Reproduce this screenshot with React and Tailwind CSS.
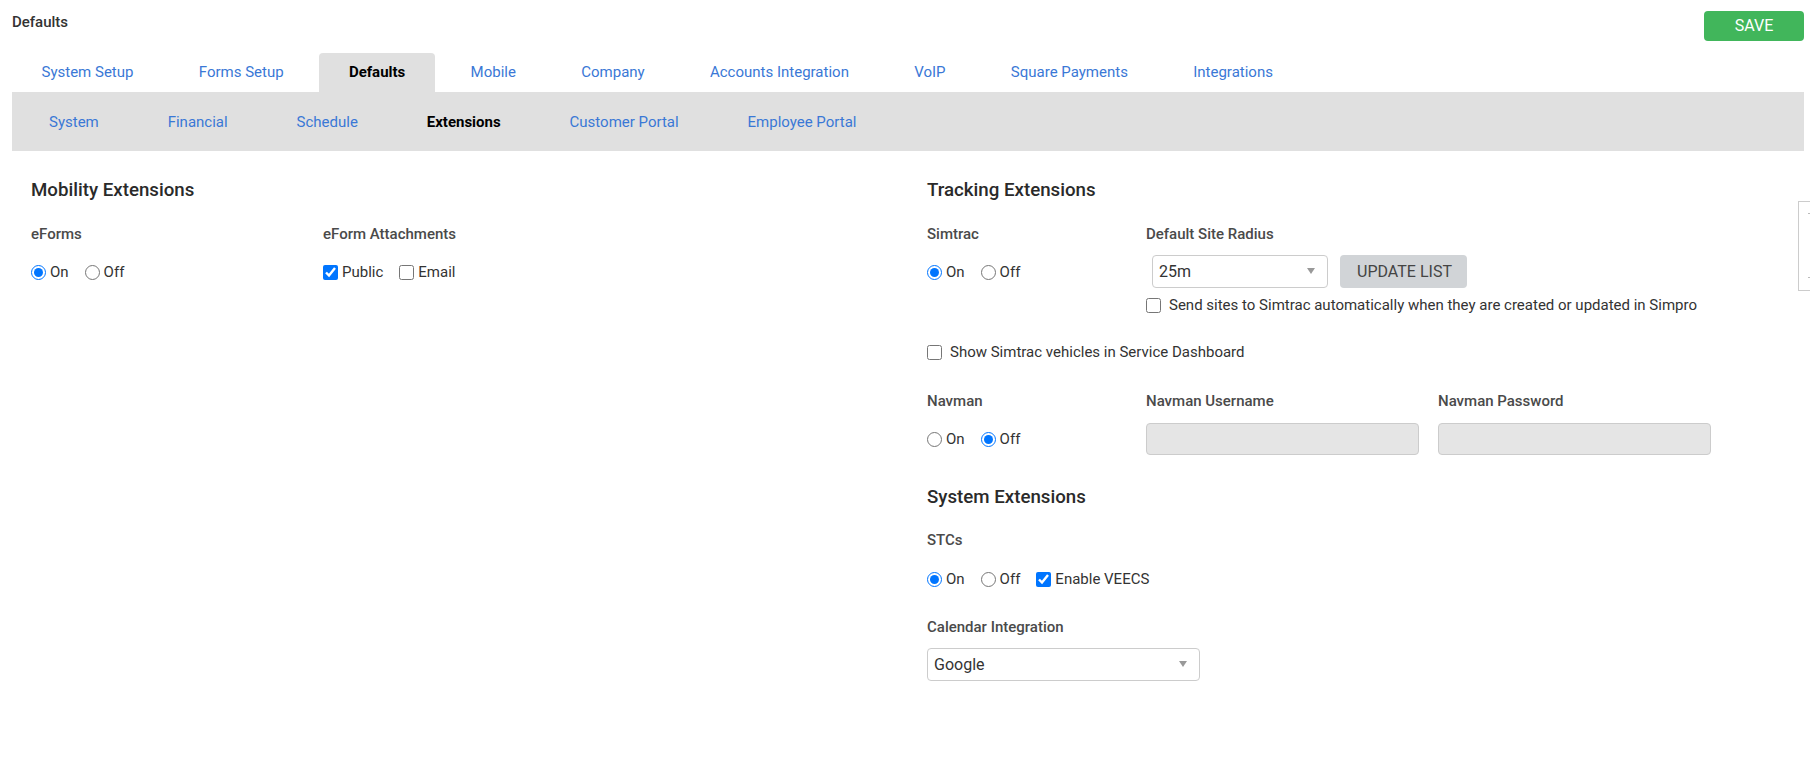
const mainTabs = ["System Setup", "Forms Setup", "Defaults", "Mobile", "Company", "Accounts Integration", "VoIP", "Square Payments", "Integrations"]
const subTabs = ["System", "Financial", "Schedule", "Extensions", "Customer Portal", "Employee Portal"]

function Radio({ label, checked, name }) {
  return (
    <label className="flex items-center gap-[4px] text-[15px] leading-5 text-[#333]">
      <input type="radio" name={name} defaultChecked={checked} className="m-0 size-[15px]" />
      {label}
    </label>
  )
}

function Check({ label, checked, wide }) {
  return (
    <label className={"flex items-center text-[15px] leading-5 text-[#333] " + (wide ? "gap-[8px]" : "gap-[4px]")}>
      <input type="checkbox" defaultChecked={checked} className="m-0 size-[15px]" />
      {label}
    </label>
  )
}

function OnOff({ name, on }) {
  return (
    <div className="flex items-center gap-[16px]">
      <Radio name={name} label="On" checked={on} />
      <Radio name={name} label="Off" checked={!on} />
    </div>
  )
}

function FieldLabel({ children }) {
  return <div className="text-[15px] leading-5 font-medium text-[#4a4a4a]">{children}</div>
}

function Heading({ children }) {
  return <h2 className="text-[18.7px] leading-[22px] font-medium text-[#2a2a2a]">{children}</h2>
}

function SelectBox({ value, className }) {
  return (
    <div className={"flex h-[33px] items-center justify-between rounded-[4px] border border-[#ccc] bg-white pl-[6px] pr-[12px] text-[16px] text-[#333] " + className}>
      <span>{value}</span>
      <span className="mb-[2px] h-0 w-0 border-x-[4px] border-t-[6px] border-x-transparent border-t-[#999]"></span>
    </div>
  )
}

export default function App() {
  return (
    <div className="relative h-[773px] overflow-hidden bg-white font-[Roboto,sans-serif]">
      {/* Top bar */}
      <div className="flex items-start justify-between pl-3 pr-[6px] pt-[11px]">
        <div className="text-[15px] leading-[22px] font-medium text-[#333]">Defaults</div>
        <button className="h-[30px] w-[100px] rounded-[4px] bg-[#41b65b] text-[16px] font-normal text-white">SAVE</button>
      </div>

      {/* Main tabs */}
      <div className="mt-[12px] flex h-[39px] pl-3">
        {mainTabs.map((t) =>
          t === "Defaults" ? (
            <div key={t} className="mr-[6.3px] flex items-center rounded-t-[4px] bg-[#e0e0e0] px-[29.5px] text-[15px] font-bold text-black">{t}</div>
          ) : (
            <div key={t} className="mr-[6.3px] flex items-center px-[29.5px] text-[15px] text-[#3a78d6]">{t}</div>
          )
        )}
      </div>

      {/* Sub tabs */}
      <div className="ml-3 mr-[6px] flex h-[59px] items-center gap-[68.9px] bg-[#e0e0e0] pl-[37px] pt-[1px] text-[15px]">
        {subTabs.map((t) => (
          <div key={t} className={t === "Extensions" ? "font-bold text-black" : "text-[#3a78d6]"}>{t}</div>
        ))}
      </div>

      <div className="flex pl-[31px] pt-[28px]">
        {/* Mobility */}
        <div className="w-[896px]">
          <Heading>Mobility Extensions</Heading>
          <div className="mt-[23px] flex">
            <div className="w-[292px]">
              <FieldLabel>eForms</FieldLabel>
              <div className="mt-[18px]">
                <OnOff name="eforms" on />
              </div>
            </div>
            <div>
              <FieldLabel>eForm Attachments</FieldLabel>
              <div className="mt-[18px] flex gap-[16px]">
                <Check label="Public" checked />
                <Check label="Email" />
              </div>
            </div>
          </div>
        </div>

        {/* Tracking + system */}
        <div className="flex-1">
          <Heading>Tracking Extensions</Heading>
          <div className="mt-[23px] flex">
            <div className="w-[219px]">
              <FieldLabel>Simtrac</FieldLabel>
              <div className="mt-[18px]">
                <OnOff name="simtrac" on />
              </div>
            </div>
            <div>
              <FieldLabel>Default Site Radius</FieldLabel>
              <div className="mt-[11px] ml-[6px] flex gap-[12px]">
                <SelectBox value="25m" className="w-[176px]" />
                <button className="h-[33px] w-[127px] rounded-[4px] bg-[#d1d4d7] pl-[2px] text-[16px] text-[#444]">UPDATE LIST</button>
              </div>
              <div className="mt-[7px]">
                <Check wide label="Send sites to Simtrac automatically when they are created or updated in Simpro" />
              </div>
            </div>
          </div>
          <div className="mt-[27px]">
            <Check wide label="Show Simtrac vehicles in Service Dashboard" />
          </div>
          <div className="mt-[29px] flex">
            <div className="w-[219px]">
              <FieldLabel>Navman</FieldLabel>
              <div className="mt-[18px]">
                <OnOff name="navman" />
              </div>
            </div>
            <div className="w-[273px]">
              <FieldLabel>Navman Username</FieldLabel>
              <div className="mt-[12px] h-[32px] rounded-[4px] border border-[#ccc] bg-[#e5e5e5]"></div>
            </div>
            <div className="ml-[19px] w-[273px]">
              <FieldLabel>Navman Password</FieldLabel>
              <div className="mt-[12px] h-[32px] rounded-[4px] border border-[#ccc] bg-[#e5e5e5]"></div>
            </div>
          </div>
          <div className="mt-[31px]">
            <Heading>System Extensions</Heading>
          </div>
          <div className="mt-[22px]">
            <FieldLabel>STCs</FieldLabel>
          </div>
          <div className="mt-[19px] flex items-center gap-[16px]">
            <OnOff name="stcs" on />
            <Check label="Enable VEECS" checked />
          </div>
          <div className="mt-[28px]">
            <FieldLabel>Calendar Integration</FieldLabel>
          </div>
          <SelectBox value="Google" className="mt-[11px] w-[273px]" />
        </div>
      </div>

      {/* Clipped widget at right edge */}
      <div className="absolute right-0 top-[201px] h-[90px] w-[12px] border border-r-0 border-[#ccc] bg-white">
        <span className="absolute right-0 top-[11px] h-px w-[2px] bg-[#bbb]"></span>
        <span className="absolute right-0 top-[75px] h-px w-[2px] bg-[#bbb]"></span>
      </div>
    </div>
  )
}
